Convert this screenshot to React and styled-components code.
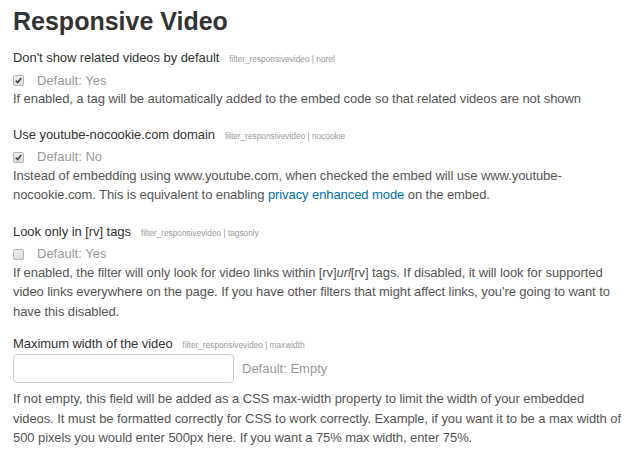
import React from 'react'
import styled, { createGlobalStyle } from 'styled-components'

const GlobalStyle = createGlobalStyle`
    body {
        margin: 0;
        background: #fff;
        font-family: "Liberation Sans", Arial, sans-serif;
        font-size: 13px;
        line-height: 20px;
        color: #333;
    }
`

const Page = styled.div`
    padding: 6px 13px 0;
`

const Title = styled.h2`
    margin: 0 0 12px;
    font-size: 25px;
    line-height: 30px;
    font-weight: bold;
    color: #333;
`

const Setting = styled.div`
    margin-bottom: ${p => p.$gap || 16}px;
`

const LabelRow = styled.div`
    display: flex;
    align-items: baseline;
    gap: 10px;
`

const Label = styled.label`
    color: #333;
    letter-spacing: -0.06px;
`

const Key = styled.span`
    font-size: 8.3px;
    color: #999;
`

const Control = styled.div`
    display: flex;
    align-items: center;
    gap: ${p => p.$gap || 13}px;
    margin-top: ${p => p.$top ?? 3}px;
    height: ${p => p.$height || 17}px;
`

const Box = styled.span`
    box-sizing: border-box;
    width: 11px;
    height: 11px;
    border: 1px solid #b5b5b5;
    border-radius: 2px;
    background: linear-gradient(#ececec, #dcdcdc);
    display: flex;
    align-items: center;
    justify-content: center;
`

const TextInput = styled.input`
    box-sizing: border-box;
    width: 221px;
    height: 29px;
    border: 1px solid #ccc;
    border-radius: 4px;
    padding: 4px 6px;
    font: inherit;
`

const Default = styled.span`
    color: #999;
`

const Desc = styled.div`
    color: #555;
    margin-top: ${p => p.$top || 0}px;
    line-height: 19.5px;
    letter-spacing: -0.08px;
`

const Link = styled.a`
    color: #0070a8;
    text-decoration: none;
`

const Check = ({ checked }) => (
    <Box>
        {checked && (
            <svg width="7" height="7" viewBox="0 0 7 7">
                <path d="M0.8 3.6 L2.7 5.6 L6.2 1" stroke="#444" strokeWidth="1.6" fill="none" />
            </svg>
        )}
    </Box>
)

const App = () => {
    return (
        <Page>
            <GlobalStyle />
            <Title>Responsive Video</Title>

            <Setting $gap={16}>
                <LabelRow>
                    <Label>Don't show related videos by default</Label>
                    <Key>filter_responsivevideo | norel</Key>
                </LabelRow>
                <Control>
                    <Check checked />
                    <Default>Default: Yes</Default>
                </Control>
                <Desc>If enabled, a tag will be automatically added to the embed code so that related videos are not shown</Desc>
            </Setting>

            <Setting $gap={17}>
                <LabelRow>
                    <Label>Use youtube-nocookie.com domain</Label>
                    <Key>filter_responsivevideo | nocookie</Key>
                </LabelRow>
                <Control>
                    <Check checked />
                    <Default>Default: No</Default>
                </Control>
                <Desc>
                    Instead of embedding using www.youtube.com, when checked the embed will use www.youtube-nocookie.com. This is equivalent to enabling <Link href="#">privacy enhanced mode</Link> on the embed.
                </Desc>
            </Setting>

            <Setting $gap={13}>
                <LabelRow>
                    <Label>Look only in [rv] tags</Label>
                    <Key>filter_responsivevideo | tagsonly</Key>
                </LabelRow>
                <Control>
                    <Check />
                    <Default>Default: Yes</Default>
                </Control>
                <Desc>
                    If enabled, the filter will only look for video links within [rv]<i>url</i>[rv] tags. If disabled, it will look for supported video links everywhere on the page. If you have other filters that might affect links, you're going to want to have this disabled.
                </Desc>
            </Setting>

            <Setting>
                <LabelRow>
                    <Label>Maximum width of the video</Label>
                    <Key>filter_responsivevideo | maxwidth</Key>
                </LabelRow>
                <Control $top={-1} $height={29} $gap={8}>
                    <TextInput type="text" />
                    <Default>Default: Empty</Default>
                </Control>
                <Desc $top={6}>
                    If not empty, this field will be added as a CSS max-width property to limit the width of your embedded videos. It must be formatted correctly for CSS to work correctly. Example, if you want it to be a max width of 500 pixels you would enter 500px here. If you want a 75% max width, enter 75%.
                </Desc>
            </Setting>
        </Page>
    )
}

export default App
